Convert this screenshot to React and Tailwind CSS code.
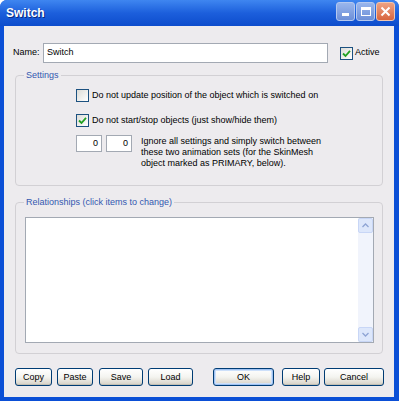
import React from 'react';

const font = { fontFamily: '"Liberation Sans", Arial, sans-serif' };

const Check = ({ checked }) => (
  <span className="w-[13px] h-[13px] shrink-0 border border-[#1c5180] bg-gradient-to-br from-[#dcdcd7] to-white flex items-center justify-center">
    {checked && (
      <svg width="9" height="9" viewBox="0 0 9 9">
        <path d="M1 4.5 L3.5 7 L8 1.8" fill="none" stroke="#21a121" strokeWidth="1.8" />
      </svg>
    )}
  </span>
);

const Btn = ({ w, children, def }) => (
  <button
    className={`h-[18px] ${w} rounded-[3px] border border-[#003c74] bg-gradient-to-b from-white via-[#f4f4f0] to-[#d6d0c5] text-[9px] text-black leading-none ${
      def ? 'shadow-[inset_0_0_0_1px_#9fc2f2,inset_0_0_0_2px_#cde0fa]' : 'shadow-[inset_0_-1px_0_#c2bfb4]'
    }`}
  >
    {children}
  </button>
);

const Group = ({ label, className, children }) => (
  <fieldset className={`border border-[#d2d0d4] rounded-[4px] mx-[11px] ${className}`}>
    <legend className="ml-[8px] px-[2px] text-[9px] leading-[13px] text-[#3358b0]">{label}</legend>
    {children}
  </fieldset>
);

export default function App() {
  return (
    <div style={font} className="w-[399px] h-[401px] flex flex-col bg-[#0b4fd6] rounded-t-[7px] overflow-hidden">
      {/* title bar */}
      <div className="h-[26px] shrink-0 flex items-center justify-between pl-[6px] pr-[4px] bg-gradient-to-b from-[#3f86f0] via-[#1c5fdc] to-[#0d4ccc]">
        <span className="text-white font-bold text-[12px] leading-none [text-shadow:1px_1px_0_#0a2a80]">Switch</span>
        <div className="flex gap-[1px] mt-[-4px]">
          <div className="w-[19px] h-[19px] rounded-[3px] border border-[#b4c8ef] bg-gradient-to-b from-[#9ab6ec] to-[#6d8fd8] flex items-end justify-center pb-[4px]">
            <span className="w-[7px] h-[3px] bg-white" />
          </div>
          <div className="w-[19px] h-[19px] rounded-[3px] border border-[#b4c8ef] bg-gradient-to-b from-[#9ab6ec] to-[#6d8fd8] flex items-center justify-center">
            <span className="w-[10px] h-[9px] border border-white border-t-[3px]" />
          </div>
          <div className="w-[19px] h-[19px] rounded-[3px] border border-[#f0c6b0] bg-gradient-to-b from-[#eca284] to-[#d8653e] flex items-center justify-center">
            <svg width="11" height="11" viewBox="0 0 11 11">
              <path d="M1.5 1.5 L9.5 9.5 M9.5 1.5 L1.5 9.5" stroke="white" strokeWidth="2" />
            </svg>
          </div>
        </div>
      </div>

      {/* body */}
      <div className="flex-1 ml-[4px] mr-[5px] mb-[4px] bg-[#edebee] text-black text-[9px] flex flex-col">
        {/* name row */}
        <div className="flex items-center mt-[17px] h-[20px]">
          <span className="ml-[9px] w-[30px]">Name:</span>
          <div className="w-[285px] h-[20px] border border-[#a3a9b3] bg-white flex items-center pl-[3px]">Switch</div>
          <div className="ml-[12px] flex items-center gap-[2px]">
            <Check checked />
            <span>Active</span>
          </div>
        </div>

        <Group label="Settings" className="mt-[6px] h-[117px]">
          <div className="pl-[60px]">
            <div className="flex items-center gap-[3px] mt-[7px]">
              <Check />
              <span>Do not update position of the object which is switched on</span>
            </div>
            <div className="flex items-center gap-[3px] mt-[11px]">
              <Check checked />
              <span>Do not start/stop objects (just show/hide them)</span>
            </div>
            <div className="flex items-start mt-[8px]">
              <div className="w-[26px] h-[17px] border border-[#a3a9b3] bg-white flex items-center justify-end pr-[3px]">0</div>
              <div className="ml-[4px] w-[26px] h-[17px] border border-[#a3a9b3] bg-white flex items-center justify-end pr-[3px]">0</div>
              <p className="ml-[9px] leading-[11px] mt-[1px]">
                Ignore all settings and simply switch between
                <br />
                these two animation sets (for the SkinMesh
                <br />
                object marked as PRIMARY, below).
              </p>
            </div>
          </div>
        </Group>

        <Group label="Relationships (click items to change)" className="mt-[10px] pb-[10px]">
          <div className="mt-[8px] mx-[9px] mr-[8px] h-[126px] border border-[#a3a9b3] bg-white flex justify-end">
            <div className="w-[15px] bg-[#f1f4fc] flex flex-col justify-between">
              <div className="h-[15px] rounded-[2px] border border-[#c8d6f6] bg-[#dde7fb] flex items-center justify-center">
                <svg width="7" height="5" viewBox="0 0 7 5"><path d="M0.5 4 L3.5 1 L6.5 4" fill="none" stroke="#8ea4d4" strokeWidth="1.3" /></svg>
              </div>
              <div className="h-[15px] rounded-[2px] border border-[#c8d6f6] bg-[#dde7fb] flex items-center justify-center">
                <svg width="7" height="5" viewBox="0 0 7 5"><path d="M0.5 1 L3.5 4 L6.5 1" fill="none" stroke="#8ea4d4" strokeWidth="1.3" /></svg>
              </div>
            </div>
          </div>
        </Group>

        {/* buttons */}
        <div className="flex items-center mt-[14px] pl-[11px]">
          <Btn w="w-[37px]">Copy</Btn>
          <div className="ml-[5px]"><Btn w="w-[36px]">Paste</Btn></div>
          <div className="ml-[6px]"><Btn w="w-[44px]">Save</Btn></div>
          <div className="ml-[5px]"><Btn w="w-[45px]">Load</Btn></div>
          <div className="ml-[20px]"><Btn w="w-[61px]" def>OK</Btn></div>
          <div className="ml-[8px]"><Btn w="w-[38px]">Help</Btn></div>
          <div className="ml-[4px]"><Btn w="w-[60px]">Cancel</Btn></div>
        </div>
      </div>
    </div>
  );
}
